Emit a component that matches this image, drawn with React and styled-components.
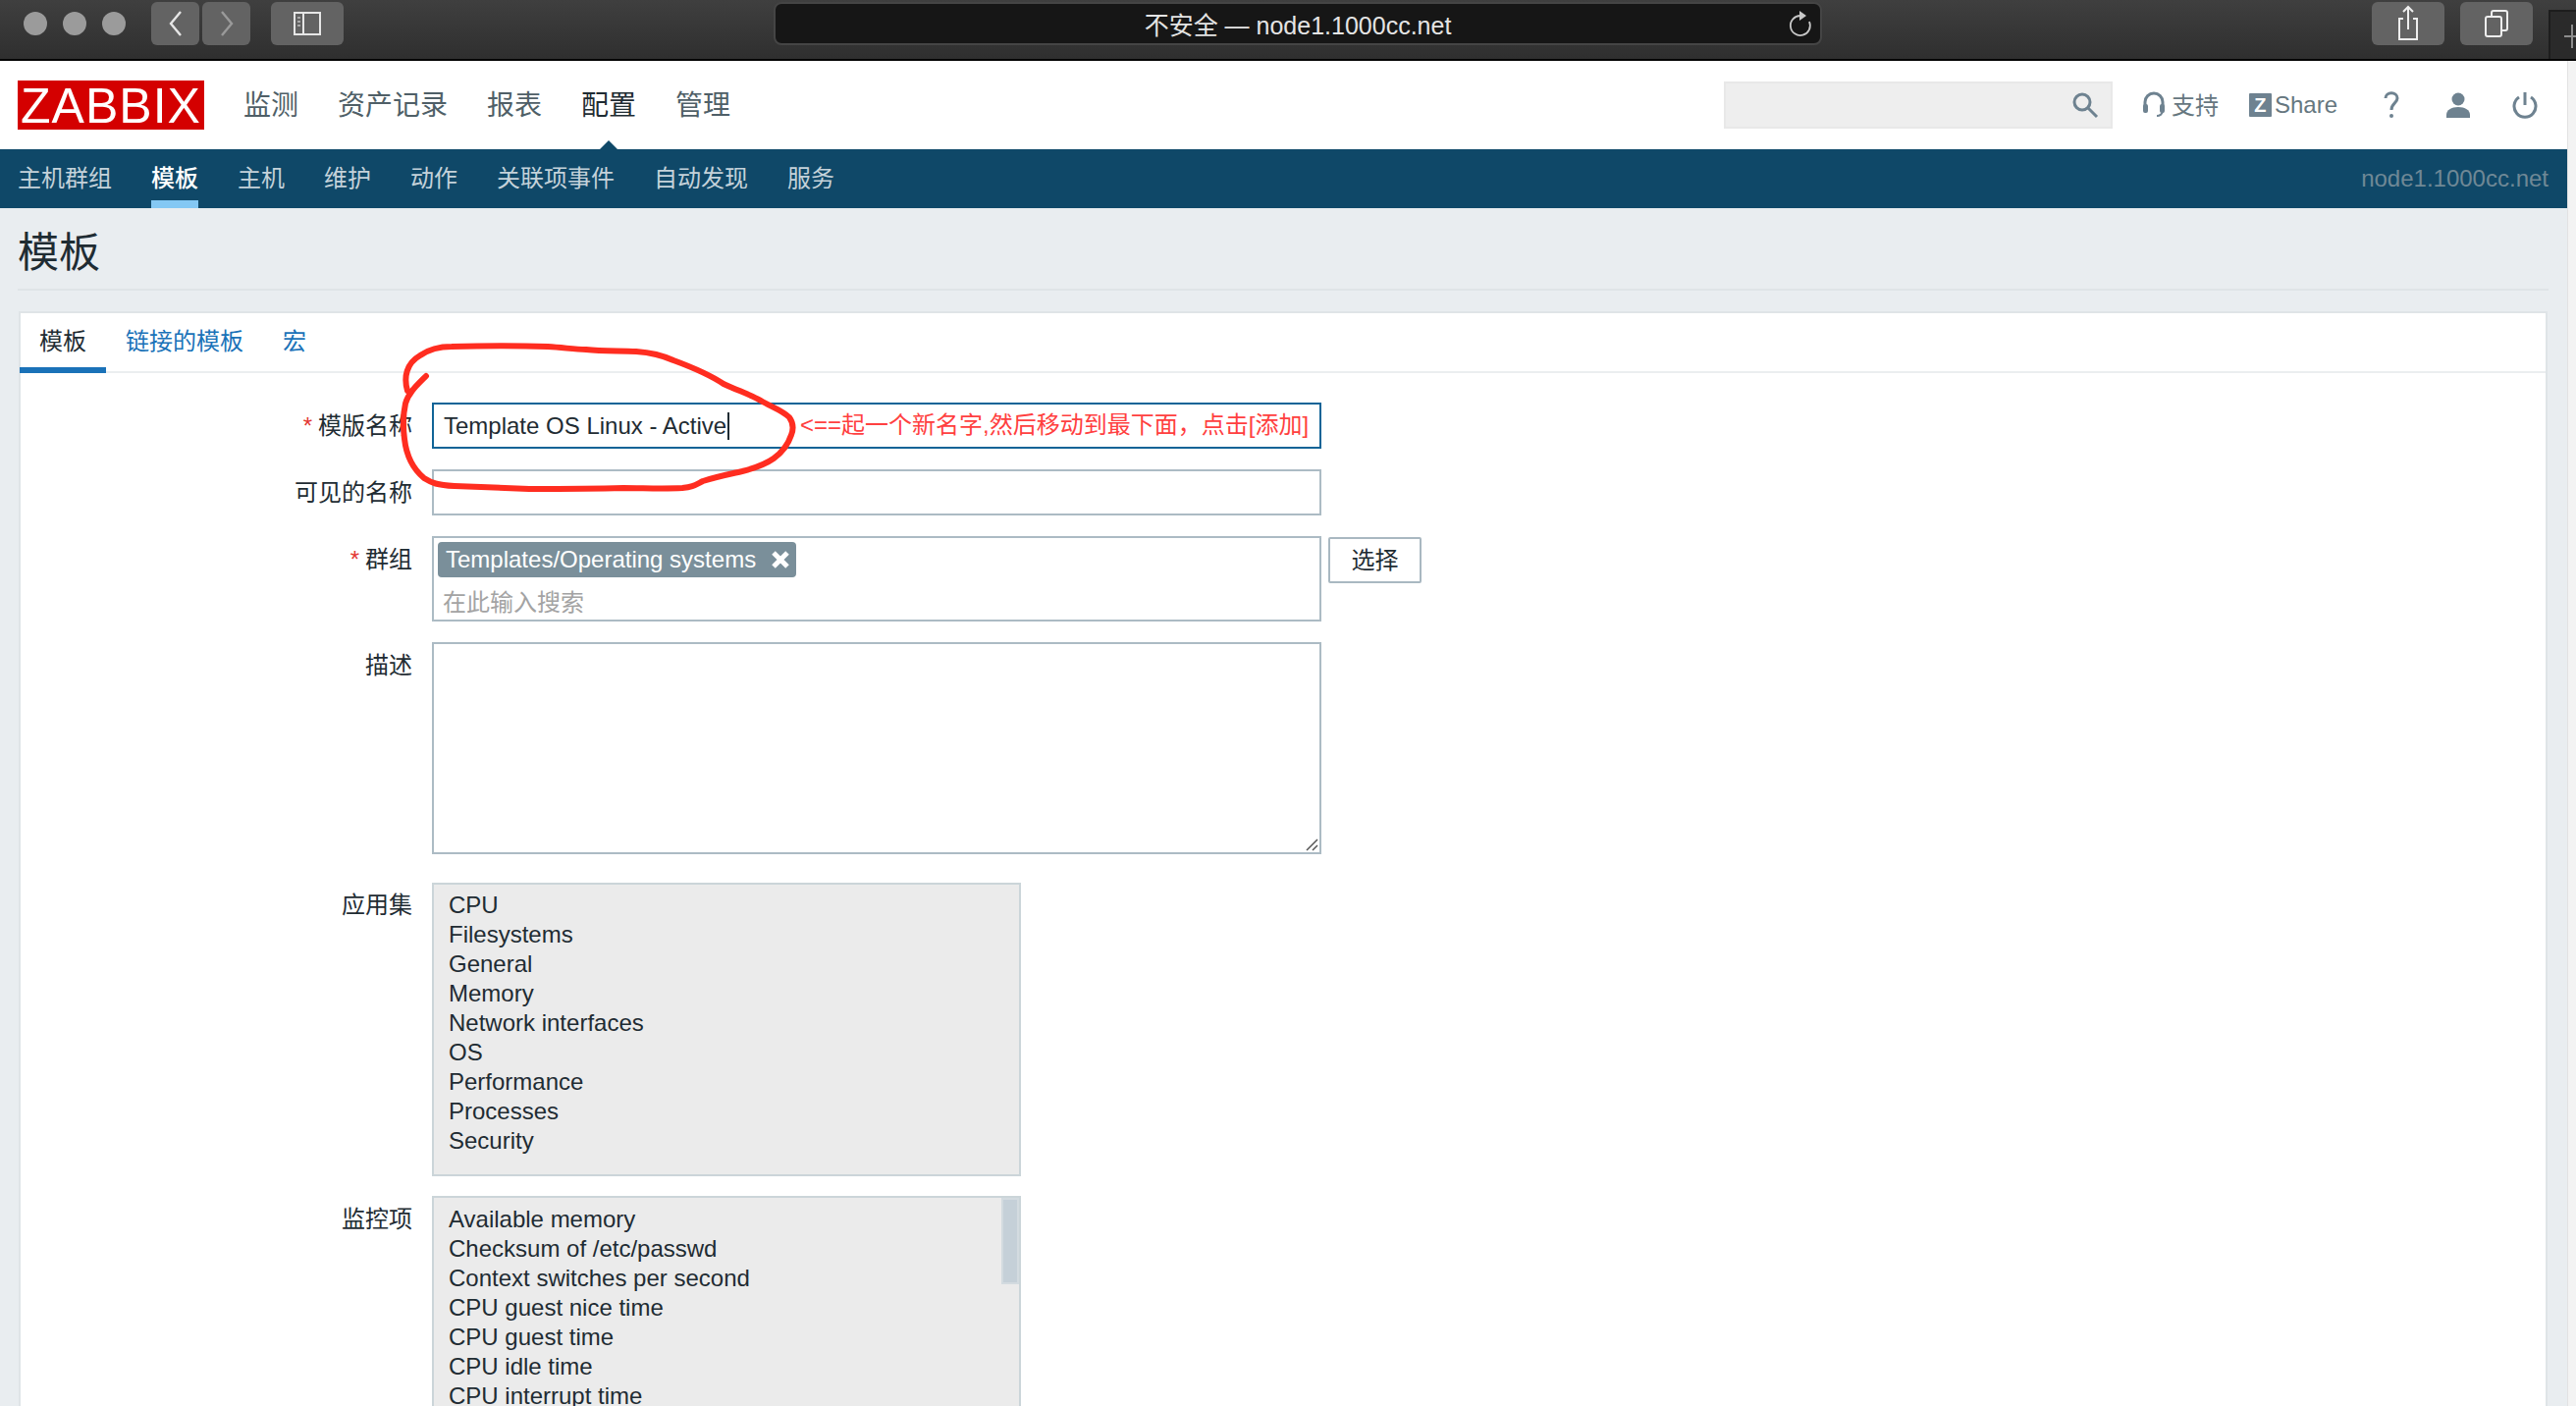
import React from 'react'
import styled, { createGlobalStyle } from 'styled-components'

const FONT = '"Liberation Sans", "Noto Sans CJK SC", sans-serif'

const GlobalStyle = createGlobalStyle`
  html, body {
    margin: 0;
    padding: 0;
    height: 1432px;
    overflow: hidden;
    background: #fff;
  }
  * { box-sizing: border-box; }
`

const Window = styled.div`
  width: 2624px;
  height: 1432px;
  overflow: hidden;
  font-family: ${FONT};
  color: #1f2c33;
`

const Chrome = styled.div`
  height: 62px;
  display: flex;
  align-items: flex-start;
  padding-top: 2px;
  background: linear-gradient(#3f3f3f, #2f2f2f);
  border-bottom: 2px solid #050505;
`

const Dots = styled.div`
  display: flex;
  gap: 16px;
  margin: 10px 26px 0 24px;
`

const Dot = styled.span`
  width: 24px;
  height: 24px;
  border-radius: 50%;
  background: #9b9b9b;
`

const ChromeButton = styled.div`
  width: ${p => p.$w}px;
  height: 44px;
  margin: 0 ${p => p.$mr || 0}px 0 ${p => p.$ml || 0}px;
  flex: none;
  display: flex;
  align-items: center;
  justify-content: center;
  border-radius: 6px;
  background: #636363;
`

const UrlBar = styled.div`
  width: 1068px;
  height: 44px;
  flex: none;
  margin: 0 560px 0 438px;
  display: flex;
  align-items: center;
  position: relative;
  background: #161616;
  border: 2px solid #454545;
  border-radius: 8px;
`

const UrlText = styled.div`
  flex: 1;
  text-align: center;
  font-size: 25px;
  color: #e4e4e4;
  white-space: nowrap;
`

const Reload = styled.svg`
  position: absolute;
  right: 8px;
  top: 5px;
`

const NewTab = styled.div`
  width: 28px;
  height: 50px;
  margin: 8px 0 0 16px;
  padding: 13px 0 0 14px;
  flex: none;
  border: 2px solid #1d1d1d;
  border-right: 0;
  border-bottom: 0;
  background: #2a2a2a;
`

const Body = styled.div`
  display: flex;
  height: 1370px;
`

const Main = styled.div`
  width: 2615px;
  flex: none;
  background: #e9edf0;
`

const ScrollStrip = styled.div`
  flex: 1;
  background: #f3f3f3;
  border-left: 1px solid #e2e2e2;
`

const Header = styled.div`
  height: 90px;
  background: #fff;
  display: flex;
  align-items: center;
  padding: 0 30px 0 18px;
`

const Logo = styled.div`
  width: 190px;
  height: 50px;
  flex: none;
  background: #d40000;
  color: #fff;
  font-size: 50px;
  line-height: 52px;
  text-align: center;
  letter-spacing: 1px;
  margin-right: 40px;
`

const TopMenu = styled.div`
  display: flex;
  gap: 40px;
  flex: 1;
  margin-bottom: 4px;
`

const TopItem = styled.div`
  position: relative;
  font-size: 28px;
  color: ${p => (p.$active ? '#1f2c33' : '#4f5f67')};

  ${p => p.$active && `
    &::after {
      content: '';
      position: absolute;
      left: 12px;
      top: 58px;
      border-left: 16px solid transparent;
      border-right: 16px solid transparent;
      border-bottom: 16px solid #0f4868;
    }
  `}
`

const SearchBox = styled.div`
  width: 396px;
  height: 48px;
  display: flex;
  align-items: center;
  justify-content: flex-end;
  padding-right: 12px;
  background: #eeeeee;
  border: 2px solid #e8e8e8;
  margin-right: 30px;
`

const HeaderLink = styled.div`
  display: flex;
  align-items: center;
  gap: ${p => p.$gap || 6}px;
  font-size: 24px;
  color: #66777f;
  margin-right: ${p => p.$mr}px;
`

const LinkText = styled.span`
  margin-bottom: 3px;
`

const ZBadge = styled.span`
  width: 23px;
  height: 24px;
  background: #6e8290;
  color: #fff;
  font-size: 20px;
  font-weight: bold;
  line-height: 24px;
  text-align: center;
  border-radius: 1px;
`

const SubNav = styled.div`
  height: 60px;
  background: #0f4868;
  display: flex;
  align-items: stretch;
`

const SubItem = styled.div`
  padding: 0 20px;
  margin-left: ${p => (p.$first ? '-2px' : '0')};
  font-size: 24px;
  line-height: 60px;
  position: relative;
  color: ${p => (p.$active ? '#ffffff' : '#c4d2da')};
  font-weight: ${p => (p.$active ? 500 : 400)};

  ${p => p.$active && `
    &::after {
      content: '';
      position: absolute;
      left: 20px;
      right: 20px;
      bottom: 0;
      height: 8px;
      background: #84c8f4;
    }
  `}
`

const NodeName = styled.div`
  margin-left: auto;
  padding-right: 19px;
  font-size: 24px;
  line-height: 59px;
  color: #6f8896;
`

const TitleBar = styled.div`
  height: 84px;
  margin: 0 19px 0 18px;
  border-bottom: 2px solid #dfe4e7;
  font-size: 42px;
  line-height: 92px;
  color: #1f2c33;
`

const Panel = styled.div`
  margin: 21px 20px 0 19px;
  height: 1200px;
  background: #fff;
  border: 2px solid #dfe4e7;
  border-width: 2px 2px 0 2px;
  position: relative;
`

const Tabs = styled.div`
  height: 61px;
  display: flex;
  margin-left: -1px;
  border-bottom: 2px solid #ebeef0;
`

const Tab = styled.div`
  padding: 0 20px;
  height: 61px;
  font-size: 24px;
  line-height: 58px;
  color: ${p => (p.$active ? '#1f2c33' : '#1a72b8')};
  border-bottom: 6px solid ${p => (p.$active ? '#1a72b8' : 'transparent')};
`

const Form = styled.div`
  padding: 30px 0 0;
  display: grid;
  grid-template-columns: 399px 1fr;
  column-gap: 20px;
  row-gap: 21px;
  align-items: start;
`

const Label = styled.div`
  text-align: right;
  font-size: 24px;
  line-height: 30px;
  padding-top: 9px;
  margin-top: ${p => p.$mt || 0}px;
  color: #1f2c33;
`

const Star = styled.span`
  color: #e33734;
  margin-right: 6px;
`

const Field = styled.div`
  position: relative;
  display: flex;
  align-items: flex-start;
`

const Input = styled.div`
  width: 906px;
  height: 47px;
  padding: 0 10px;
  font-size: 24px;
  line-height: 44px;
  border: 2px solid ${p => (p.$focus ? '#106497' : '#acbbc4')};
  background: #fff;
  color: #1f2c33;
  white-space: nowrap;
`

const Caret = styled.span`
  display: inline-block;
  width: 2px;
  height: 28px;
  margin-left: 1px;
  vertical-align: -6px;
  background: #1f2c33;
`

const Note = styled.div`
  position: absolute;
  left: 375px;
  top: 5px;
  font-size: 24px;
  line-height: 36px;
  color: #ff4040;
  white-space: nowrap;
`

const GroupBox = styled.div`
  width: 906px;
  height: 87px;
  padding: 4px;
  border: 2px solid #acbbc4;
  background: #fff;
`

const Chip = styled.div`
  display: inline-flex;
  align-items: center;
  gap: 15px;
  height: 36px;
  padding: 0 6px 0 8px;
  font-size: 24px;
  color: #fff;
  background: #7a8f9a;
  border-radius: 4px;
`

const Placeholder = styled.div`
  font-size: 24px;
  line-height: 30px;
  margin: 11px 0 0 5px;
  color: #a3a3a3;
`

const SelectButton = styled.div`
  width: 95px;
  height: 47px;
  margin: 1px 0 0 7px;
  text-align: center;
  font-size: 24px;
  line-height: 43px;
  color: #1f2c33;
  border: 2px solid #a9b8c1;
  border-radius: 2px;
  background: #fff;
`

const TextArea = styled.div`
  width: 906px;
  height: 216px;
  position: relative;
  border: 2px solid #acbbc4;
  background: #fff;
`

const Grip = styled.svg`
  position: absolute;
  right: 1px;
  bottom: 1px;
`

const ListBox = styled.div`
  width: 600px;
  height: ${p => p.$h}px;
  padding: ${p => p.$pt}px 14px 0 15px;
  position: relative;
  overflow: hidden;
  font-size: 24px;
  line-height: 30px;
  margin-top: ${p => p.$mt || 0}px;
  background: #ebebeb;
  border: 2px solid #cbd5d9;
  color: #1f2c33;
`

const ListThumb = styled.div`
  position: absolute;
  top: 0;
  right: 0;
  width: 18px;
  height: 88px;
  background: #c5d0d8;
  border: 2px solid #d3dbe0;
`

const Scribble = styled.svg`
  position: absolute;
  left: 0;
  top: 0;
  pointer-events: none;
`

const apps = ['CPU', 'Filesystems', 'General', 'Memory', 'Network interfaces', 'OS', 'Performance', 'Processes', 'Security']
const items = [
  'Available memory',
  'Checksum of /etc/passwd',
  'Context switches per second',
  'CPU guest nice time',
  'CPU guest time',
  'CPU idle time',
  'CPU interrupt time'
]
const subNav = ['主机群组', '模板', '主机', '维护', '动作', '关联项事件', '自动发现', '服务']
const topNav = ['监测', '资产记录', '报表', '配置', '管理']

const App = () => {
  return (
    <Window>
      <GlobalStyle />
      <Chrome>
        <Dots>
          <Dot />
          <Dot />
          <Dot />
        </Dots>
        <ChromeButton $w={49}>
          <svg width="20" height="30" viewBox="0 0 20 30" fill="none" stroke="#e6e6e6" strokeWidth="2.4">
            <path d="M15 3 5 15l10 12" />
          </svg>
        </ChromeButton>
        <ChromeButton $w={49} $ml={3}>
          <svg width="20" height="30" viewBox="0 0 20 30" fill="none" stroke="#9a9a9a" strokeWidth="2.4">
            <path d="M5 3l10 12L5 27" />
          </svg>
        </ChromeButton>
        <ChromeButton $w={74} $ml={21}>
          <svg width="32" height="26" viewBox="0 0 32 26" fill="none" stroke="#e6e6e6" strokeWidth="2">
            <rect x="3" y="2" width="26" height="22" />
            <path d="M12 2v22" />
            <path d="M6 7h3M6 11h3M6 15h3" stroke="#aaa" />
          </svg>
        </ChromeButton>
        <UrlBar>
          <UrlText>不安全 — node1.1000cc.net</UrlText>
          <Reload width="26" height="30" viewBox="0 0 26 30" fill="none" stroke="#c8c8c8" strokeWidth="1.8">
            <path d="M14 7a10 10 0 1 0 9 6" />
            <path d="M13 2l7 5-7 5z" fill="#c8c8c8" stroke="none" />
          </Reload>
        </UrlBar>
        <ChromeButton $w={74}>
          <svg width="24" height="38" viewBox="0 0 24 38" fill="none" stroke="#eee" strokeWidth="2">
            <path d="M7 14H3v21h18V14h-4" />
            <path d="M12 25V2M7 7l5-5 5 5" />
          </svg>
        </ChromeButton>
        <ChromeButton $w={74} $ml={16}>
          <svg width="28" height="30" viewBox="0 0 28 30" fill="none" stroke="#eee" strokeWidth="2">
            <rect x="3" y="8" width="16" height="20" rx="2" />
            <path d="M9 8V4a2 2 0 0 1 2-2h12a2 2 0 0 1 2 2v16a2 2 0 0 1-2 2h-4" />
          </svg>
        </ChromeButton>
        <NewTab>
          <svg width="12" height="24" viewBox="0 0 12 24" stroke="#8c8c8c" strokeWidth="2">
            <path d="M8 0v24M0 12h12" />
          </svg>
        </NewTab>
      </Chrome>
      <Body>
        <Main>
          <Header>
            <Logo>ZABBIX</Logo>
            <TopMenu>
              {topNav.map(name => (
                <TopItem key={name} $active={name === '配置'}>{name}</TopItem>
              ))}
            </TopMenu>
            <SearchBox>
              <svg width="28" height="28" viewBox="0 0 28 28" fill="none" stroke="#6e8290" strokeWidth="3">
                <circle cx="11" cy="11" r="8" />
                <path d="M17 17l9 9" />
              </svg>
            </SearchBox>
            <HeaderLink $mr={31}>
              <svg width="24" height="28" viewBox="0 0 24 28" fill="none" stroke="#6e8290" strokeWidth="3">
                <path d="M3 18v-7a9 9 0 0 1 18 0v7" />
                <rect x="1" y="13" width="5" height="9" rx="2" fill="#6e8290" stroke="none" />
                <rect x="18" y="13" width="5" height="9" rx="2" fill="#6e8290" stroke="none" />
                <path d="M21 20c0 3-3 5-6 5" strokeWidth="2" />
              </svg>
              <LinkText>支持</LinkText>
            </HeaderLink>
            <HeaderLink $mr={46} $gap={3}>
              <ZBadge>Z</ZBadge>
              Share
            </HeaderLink>
            <HeaderLink $mr={46}>
              <svg width="18" height="28" viewBox="0 0 18 28" fill="none" stroke="#6e8290" strokeWidth="3">
                <path d="M3 7c0-7 12-7 12 0 0 5-6 5-6 12" />
                <circle cx="9" cy="25" r="2" fill="#6e8290" stroke="none" />
              </svg>
            </HeaderLink>
            <HeaderLink $mr={42}>
              <svg width="26" height="26" viewBox="0 0 26 26" fill="#6e8290">
                <circle cx="13" cy="7" r="6.5" />
                <path d="M1 26v-3c0-5 5-8 12-8s12 3 12 8v3z" />
              </svg>
            </HeaderLink>
            <HeaderLink $mr={0}>
              <svg width="26" height="28" viewBox="0 0 26 28" fill="none" stroke="#6e8290" strokeWidth="3">
                <path d="M13 1v13" />
                <path d="M7 6a11 11 0 1 0 12 0" />
              </svg>
            </HeaderLink>
          </Header>
          <SubNav>
            {subNav.map((name, i) => (
              <SubItem key={name} $first={i === 0} $active={name === '模板'}>{name}</SubItem>
            ))}
            <NodeName>node1.1000cc.net</NodeName>
          </SubNav>
          <TitleBar>模板</TitleBar>
          <Panel>
            <Tabs>
              <Tab $active>模板</Tab>
              <Tab>链接的模板</Tab>
              <Tab>宏</Tab>
            </Tabs>
            <Form>
              <Label><Star>*</Star>模版名称</Label>
              <Field>
                <Input $focus>Template OS Linux - Active<Caret /></Input>
                <Note>{'<==起一个新名字,然后移动到最下面，点击[添加]'}</Note>
              </Field>

              <Label>可见的名称</Label>
              <Field>
                <Input />
              </Field>

              <Label><Star>*</Star>群组</Label>
              <Field>
                <GroupBox>
                  <Chip>
                    Templates/Operating systems
                    <svg width="20" height="20" viewBox="0 0 20 20" stroke="#fff" strokeWidth="5">
                      <path d="M3 3l14 14M17 3 3 17" />
                    </svg>
                  </Chip>
                  <Placeholder>在此输入搜索</Placeholder>
                </GroupBox>
                <SelectButton>选择</SelectButton>
              </Field>

              <Label>描述</Label>
              <Field>
                <TextArea>
                  <Grip width="14" height="14" viewBox="0 0 14 14" stroke="#555" strokeWidth="1.5">
                    <path d="M2 13 13 2M8 13l5-5" />
                  </Grip>
                </TextArea>
              </Field>

              <Label $mt={7}>应用集</Label>
              <Field>
                <ListBox $h={299} $mt={8} $pt={6}>
                  {apps.map(name => <div key={name}>{name}</div>)}
                </ListBox>
              </Field>

              <Label $mt={-1}>监控项</Label>
              <Field>
                <ListBox $h={300} $mt={-1} $pt={7}>
                  {items.map(name => <div key={name}>{name}</div>)}
                  <ListThumb />
                </ListBox>
              </Field>
            </Form>
            <Scribble width="900" height="300" viewBox="21 319 900 300" fill="none" stroke="#ff2d20" strokeWidth="6" strokeLinecap="round" strokeLinejoin="round">
              <path d="M415 398C411 384 414 370 428 362C438 355 448 353 460 353C495 352 530 352 558 353C575 354 585 356 597 356C615 358 632 357 648 358C662 359 675 362 686 367C705 374 722 381 737 391C752 398 765 402 775 408C785 414 797 418 804 425C809 432 808 438 806 443C802 455 795 462 788 467C778 474 768 477 756 480C738 484 728 486 716 490C708 494 706 496 695 497C675 498 655 497 635 497C600 498 570 498 539 498C515 497 490 496 463 495C445 494 440 492 432 487C420 477 414 465 412 447C410 432 411 420 413 411C416 400 425 392 434 383" />
            </Scribble>
          </Panel>
        </Main>
        <ScrollStrip />
      </Body>
    </Window>
  )
}

export default App
